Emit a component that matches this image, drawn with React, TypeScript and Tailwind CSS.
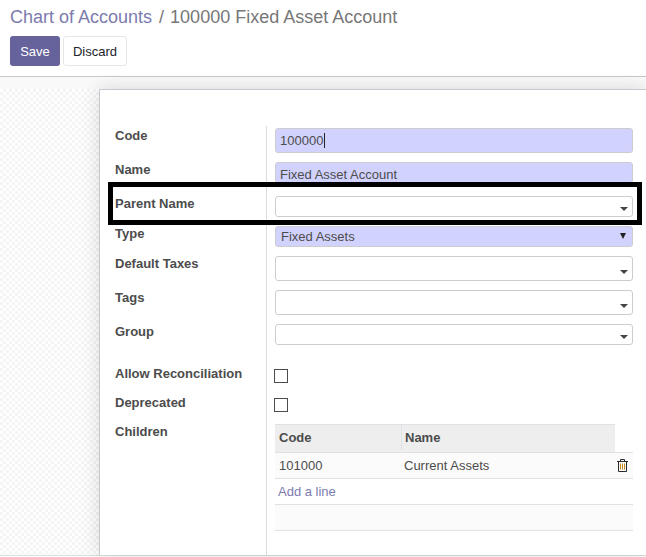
const inputClass =
  "w-[358px] rounded-[3px] border border-[#cdcdcd] flex items-center px-[4px] text-[13px] text-[#4c4c4c]";

function Caret({ tall }: { tall?: boolean }) {
  return (
    <svg
      width="8"
      height="4"
      viewBox="0 0 8 4"
      className={`absolute right-[4px] ${tall ? "top-[13px]" : "top-[10px]"}`}
    >
      <path d="M0 0H8L4 4Z" fill="#444" />
    </svg>
  );
}

function TrashIcon() {
  return (
    <svg width="11" height="13" viewBox="0 0 11 13" fill="none" className="mr-[5px]">
      <path d="M0 2.5H11M3.5 2.5V.5H7.5V2.5" stroke="#2b2b2b" />
      <path d="M1.5 2.5V12.5H9.5V2.5" stroke="#2b2b2b" />
      <path d="M3.5 4.5V10.5M5.5 4.5V10.5M7.5 4.5V10.5" stroke="#c98a1a" />
    </svg>
  );
}

function Row({
  label,
  labelClass = "pt-px",
  pb,
  children,
}: {
  label: string;
  labelClass?: string;
  pb: string;
  children: React.ReactNode;
}) {
  return (
    <div className="flex">
      <div className={`w-[166px] shrink-0 pl-[15px] text-[13px] leading-[14px] font-bold text-[#4c4c4c] ${labelClass}`}>
        {label}
      </div>
      <div className={`flex-1 border-l border-[#dcdcdc] pl-[8px] ${pb}`}>{children}</div>
    </div>
  );
}

export default function App() {
  return (
    <div className="h-[557px] w-[646px] overflow-hidden bg-white font-['Liberation_Sans',Arial,sans-serif]">
      {/* Control panel */}
      <div className="h-[77px] border-b border-[#c8c8c8] px-[10px] pt-[7px]">
        <div className="text-[18px] leading-[21px] text-[#777]">
          <span className="text-[#7c7bad]">Chart of Accounts</span>
          <span className="ml-[7px] mr-[6px]">/</span>
          <span>100000 Fixed Asset Account</span>
        </div>
        <div className="mt-[8px] flex gap-[3px]">
          <button className="h-[30px] w-[50px] rounded-[3px] bg-[#66639c] pt-px text-[13px] text-white">Save</button>
          <button className="h-[30px] w-[64px] rounded-[3px] border border-[#e6e6e6] bg-white pt-px text-[13px] text-[#212529]">
            Discard
          </button>
        </div>
      </div>

      {/* Sheet background */}
      <div className="h-[12px] bg-[#f9f9f9]" />
      <div className="flex h-[467px] border-b border-[#dedede] bg-[repeating-conic-gradient(#f4f4f4_0_25%,#ffffff_0_50%)] bg-[length:6px_6px]">
        <div className="w-[99px] shrink-0" />
        <div className="relative flex-1 border-t border-l border-[#c8c8d0] bg-white pt-[36px] shadow-[0_0_18px_rgba(0,0,0,0.14)]">
          <Row label="Code" labelClass="pt-[3px]" pb="pt-[2px] pb-[9px]">
            <div className={`${inputClass} h-[25px] bg-[#d2d2ff]`}>
              100000<span className="ml-px h-[15px] w-px bg-[#222]" />
            </div>
          </Row>
          <Row label="Name" pb="pb-[13px]">
            <div className={`${inputClass} h-[21px] items-start bg-[#d2d2ff] pt-[2px]`}>Fixed Asset Account</div>
          </Row>
          <Row label="Parent Name" pb="pb-[9px]">
            <div className={`${inputClass} relative h-[21px]`}>
              <Caret />
            </div>
          </Row>
          <Row label="Type" pb="pb-[9px]">
            <div className={`${inputClass} relative h-[21px] bg-[#d2d2ff] pl-[5px]`}>
              Fixed Assets
              <svg width="6" height="6" viewBox="0 0 6 6" className="absolute right-[6px] top-[6px]">
                <path d="M0 0H6L3 6Z" fill="#222" />
              </svg>
            </div>
          </Row>
          <Row label="Default Taxes" pb="pb-[9px]">
            <div className={`${inputClass} relative h-[25px]`}>
              <Caret tall />
            </div>
          </Row>
          <Row label="Tags" pb="pb-[9px]">
            <div className={`${inputClass} relative h-[25px]`}>
              <Caret tall />
            </div>
          </Row>
          <Row label="Group" pb="pb-[24px]">
            <div className={`${inputClass} relative h-[21px]`}>
              <Caret />
            </div>
          </Row>
          <Row label="Allow Reconciliation" labelClass="-mt-[2px]" pb="pb-[15px]">
            <div className="-ml-px h-[14px] w-[14px] border border-[#4c4c4c]" />
          </Row>
          <Row label="Deprecated" labelClass="-mt-[2px]" pb="pb-[12px]">
            <div className="-ml-px h-[14px] w-[14px] border border-[#4c4c4c]" />
          </Row>
          <Row label="Children" pb="pb-[24px]">
            <div className="w-[358px] text-[13px] text-[#4c4c4c]">
              <div className="flex h-[28px] w-[340px] items-center border-t border-[#dee2e6] bg-[#eeeeee] pb-[2px] font-bold">
                <div className="w-[126px] pl-[4px]">Code</div>
                <div className="flex h-full items-center border-l border-[#dee2e6] pl-[3px]">Name</div>
              </div>
              <div className="flex h-[27px] items-center border-y border-[#dee2e6] bg-[#fbfbfb]">
                <div className="w-[129px] pl-[4px]">101000</div>
                <div className="flex-1">Current Assets</div>
                <TrashIcon />
              </div>
              <div className="flex h-[26px] items-center border-b border-[#dee2e6] pl-[3px] text-[#7c7bad]">Add a line</div>
              <div className="h-[26px] border-b border-[#dee2e6] bg-[#fbfbfb]" />
            </div>
          </Row>
          {/* Annotation box over the Parent Name row */}
          <div className="absolute left-[8px] top-[92px] h-[43px] w-[534px] border-[5px] border-black" />
        </div>
      </div>
    </div>
  );
}
